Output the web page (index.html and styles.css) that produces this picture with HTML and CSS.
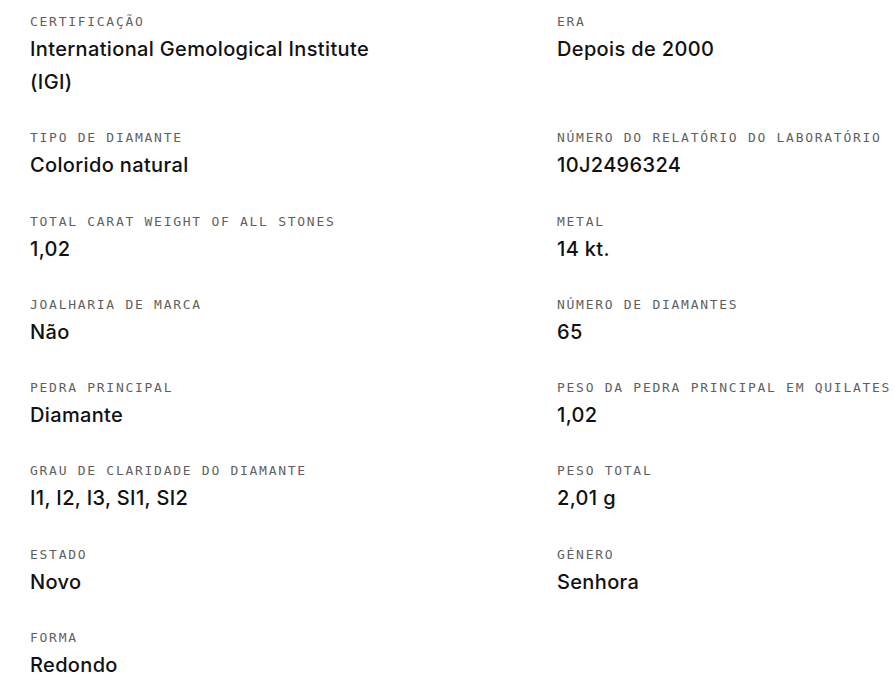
FILE: index.html
```html
<!DOCTYPE html>
<html lang="pt">
<head>
<meta charset="utf-8">
<link rel="stylesheet" href="styles.css">
</head>
<body>
<div class="specs">
  <div class="item"><div class="label">Certificação</div><div class="value">International Gemological Institute (IGI)</div></div>
  <div class="item"><div class="label">Era</div><div class="value">Depois de 2000</div></div>
  <div class="item"><div class="label">Tipo de diamante</div><div class="value">Colorido natural</div></div>
  <div class="item"><div class="label">Número do relatório do laboratório</div><div class="value">10J2496324</div></div>
  <div class="item"><div class="label">Total carat weight of all stones</div><div class="value">1,02</div></div>
  <div class="item"><div class="label">Metal</div><div class="value">14 kt.</div></div>
  <div class="item"><div class="label">Joalharia de marca</div><div class="value">Não</div></div>
  <div class="item"><div class="label">Número de diamantes</div><div class="value">65</div></div>
  <div class="item"><div class="label">Pedra principal</div><div class="value">Diamante</div></div>
  <div class="item"><div class="label">Peso da pedra principal em quilates</div><div class="value">1,02</div></div>
  <div class="item"><div class="label">Grau de claridade do diamante</div><div class="value">I1, I2, I3, SI1, SI2</div></div>
  <div class="item"><div class="label">Peso total</div><div class="value">2,01 g</div></div>
  <div class="item"><div class="label">Estado</div><div class="value">Novo</div></div>
  <div class="item"><div class="label">Género</div><div class="value">Senhora</div></div>
  <div class="item"><div class="label">Forma</div><div class="value">Redondo</div></div>
</div>
</body>
</html>
```
FILE: styles.css
```css
html, body {
  margin: 0;
  padding: 0;
  background: #ffffff;
}
body {
  overflow: hidden;
}
.specs {
  display: grid;
  grid-template-columns: 370px 1fr;
  column-gap: 157px;
  row-gap: 30.3px;
  padding: 13px 0 0 30px;
}
.item {
  display: flex;
  flex-direction: column;
  min-width: 0;
}
.label {
  font-family: "DejaVu Sans Mono", "Liberation Mono", monospace;
  font-size: 13px;
  line-height: 17px;
  letter-spacing: 1.72px;
  text-transform: uppercase;
  color: #5f5f5f;
  white-space: nowrap;
  margin-bottom: 3px;
}
.value {
  font-family: Inter, "Noto Sans", sans-serif;
  font-size: 20px;
  font-weight: 500;
  line-height: 33px;
  letter-spacing: 0.35px;
  color: #111111;
}
```
